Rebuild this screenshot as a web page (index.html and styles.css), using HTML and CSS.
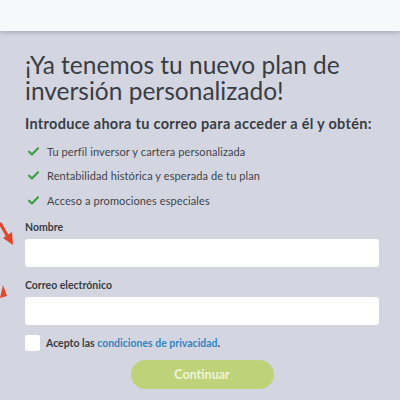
FILE: index.html
```html
<!DOCTYPE html>
<html lang="es">
<head>
<meta charset="utf-8">
<link rel="stylesheet" href="styles.css">
</head>
<body>
<div class="topbar"></div>
<main class="content">
  <h1 class="title">¡Ya tenemos tu nuevo plan de inversión personalizado!</h1>
  <p class="subtitle">Introduce ahora tu correo para acceder a él y obtén:</p>
  <ul class="benefits">
    <li><svg class="check" viewBox="0 0 12 10" width="11" height="9"><path d="M1 5.2 L4.3 8.3 L11 1.5" fill="none" stroke="#3d9b48" stroke-width="2.4" stroke-linecap="round" stroke-linejoin="round"/></svg>Tu perfil inversor y cartera personalizada</li>
    <li><svg class="check" viewBox="0 0 12 10" width="11" height="9"><path d="M1 5.2 L4.3 8.3 L11 1.5" fill="none" stroke="#3d9b48" stroke-width="2.4" stroke-linecap="round" stroke-linejoin="round"/></svg>Rentabilidad histórica y esperada de tu plan</li>
    <li><svg class="check" viewBox="0 0 12 10" width="11" height="9"><path d="M1 5.2 L4.3 8.3 L11 1.5" fill="none" stroke="#3d9b48" stroke-width="2.4" stroke-linecap="round" stroke-linejoin="round"/></svg>Acceso a promociones especiales</li>
  </ul>
  <div class="field">
    <label class="label">Nombre</label>
    <div class="input"></div>
    <svg class="arrow arrow-one" viewBox="0 0 16 24" width="16" height="24"><path d="M0 2 L8 16" stroke="#e2472c" stroke-width="3.2"/><path d="M3 17 L13 24 L12 11 Z" fill="#e2472c"/></svg>
  </div>
  <div class="field field-second">
    <label class="label">Correo electrónico</label>
    <div class="input"></div>
    <svg class="arrow arrow-two" viewBox="0 0 8 16" width="8" height="16"><path d="M0 14 L3 1 L7 12 Z" fill="#e2472c"/></svg>
  </div>
  <div class="consent">
    <span class="box"></span>
    <span>Acepto las <a class="link">condiciones de privacidad</a>.</span>
  </div>
  <div class="actions">
    <button class="btn">Continuar</button>
  </div>
</main>
</body>
</html>
```
FILE: styles.css
```css
html, body {
  margin: 0;
  padding: 0;
  background: #d3d6e0;
  font-family: Lato, "Open Sans", sans-serif;
  color: #3b3e46;
}
.topbar {
  height: 31px;
  background: #f6f9fa;
  box-shadow: 0 2px 4px rgba(60, 60, 80, 0.25);
  position: relative;
}
.content {
  padding: 0 21px 0 25px;
}
.title {
  margin: 21px 0 0;
  font-size: 24.5px;
  line-height: 26px;
  font-weight: 400;
  color: #3a3d44;
  letter-spacing: 0;
}
.subtitle {
  margin: 11px 0 0;
  font-size: 14.5px;
  line-height: 18px;
  font-weight: 700;
  color: #3a3d44;
  letter-spacing: 0.3px;
  white-space: nowrap;
}
.benefits {
  list-style: none;
  margin: 6px 0 0;
  padding: 0;
}
.benefits li {
  display: flex;
  align-items: center;
  gap: 8px;
  height: 24.5px;
  font-size: 11px;
  color: #41444c;
  padding-left: 3px;
  letter-spacing: 0.1px;
}
.check {
  flex: none;
}
.field {
  position: relative;
  margin-top: 5px;
}
.field-second {
  margin-top: 9px;
}
.label {
  display: block;
  font-size: 10.5px;
  line-height: 18px;
  font-weight: 700;
  color: #3a3d44;
  margin-bottom: 3px;
}
.input {
  height: 28px;
  background: #ffffff;
  border-radius: 3px;
}
.arrow {
  position: absolute;
}
.arrow-one {
  left: -25px;
  top: 3px;
}
.arrow-two {
  left: -25px;
  top: 8px;
}
.consent {
  margin-top: 10px;
  display: flex;
  align-items: center;
  gap: 6px;
  font-size: 10.5px;
  font-weight: 700;
  color: #3a3d44;
}
.box {
  width: 15px;
  height: 16px;
  background: #fff;
  border-radius: 2px;
  flex: none;
}
.link {
  color: #3484c3;
  font-weight: 700;
}
.actions {
  display: flex;
  justify-content: center;
  margin-top: 9px;
}
.btn {
  width: 143px;
  height: 29px;
  border: none;
  border-radius: 15px;
  background: #bed27a;
  color: #eef4d8;
  font-family: Lato, sans-serif;
  font-size: 12.5px;
  font-weight: 700;
}
```
